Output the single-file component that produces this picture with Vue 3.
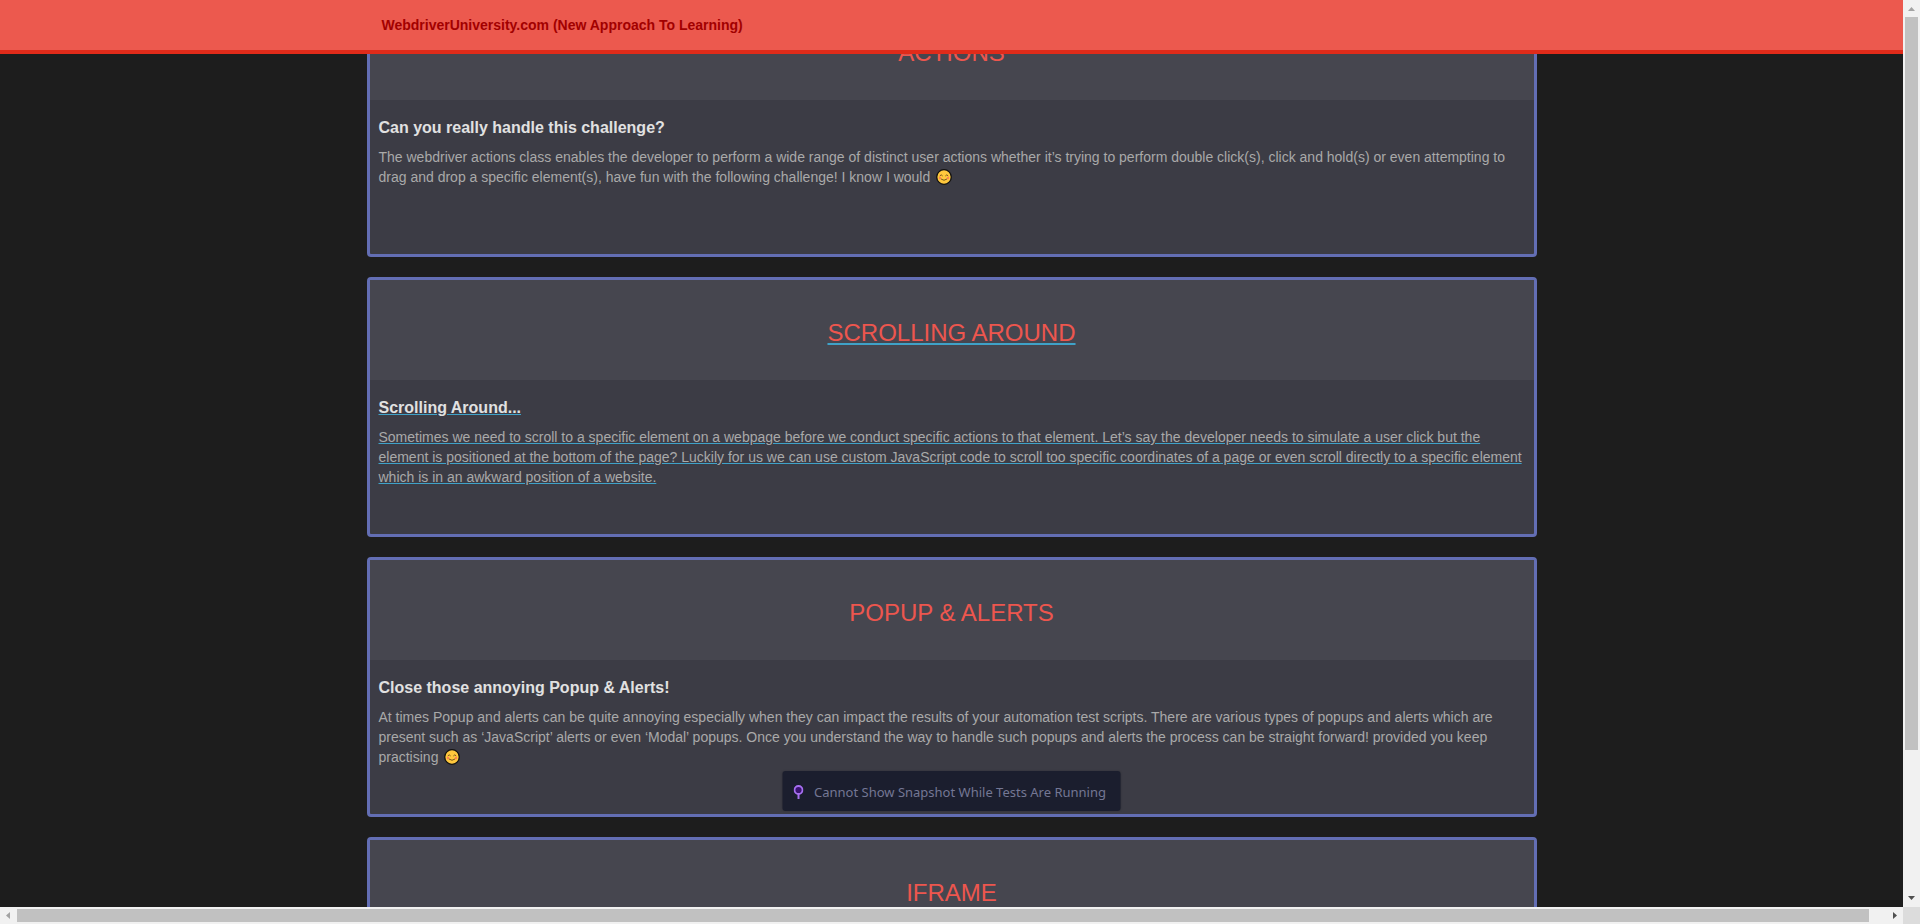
<script setup>
const cards = [
  {
    title: 'ACTIONS',
    subtitle: 'Can you really handle this challenge?',
    text: 'The webdriver actions class enables the developer to perform a wide range of distinct user actions whether it’s trying to perform double click(s), click and hold(s) or even attempting to drag and drop a specific element(s), have fun with the following challenge! I know I would',
    smile: true,
  },
  {
    title: 'SCROLLING AROUND',
    subtitle: 'Scrolling Around...',
    text: 'Sometimes we need to scroll to a specific element on a webpage before we conduct specific actions to that element. Let’s say the developer needs to simulate a user click but the element is positioned at the bottom of the page? Luckily for us we can use custom JavaScript code to scroll too specific coordinates of a page or even scroll directly to a specific element which is in an awkward position of a website.',
    active: true,
  },
  {
    title: 'POPUP & ALERTS',
    subtitle: 'Close those annoying Popup & Alerts!',
    text: 'At times Popup and alerts can be quite annoying especially when they can impact the results of your automation test scripts. There are various types of popups and alerts which are present such as ‘JavaScript’ alerts or even ‘Modal’ popups. Once you understand the way to handle such popups and alerts the process can be straight forward! provided you keep practising',
    smile: true,
  },
  { title: 'IFRAME', subtitle: '', text: '' },
]
</script>

<template>
  <div class="frame">
    <div class="view">
      <nav class="navbar">
        <div class="container">
          <a class="brand" href="#">WebdriverUniversity.com (New Approach To Learning)</a>
        </div>
      </nav>
      <main class="pane">
        <div class="container list">
          <a v-for="card in cards" :key="card.title" href="#" class="card" :class="{ active: card.active }">
            <div class="card-head"><h1>{{ card.title }}</h1></div>
            <div class="card-body">
              <h4>{{ card.subtitle }}</h4>
              <p>
                {{ card.text }}
                <svg v-if="card.smile" class="smile" viewBox="0 0 16 16" aria-hidden="true">
                  <circle cx="8" cy="8" r="7.3" fill="#ffc83d" stroke="#111" stroke-width="1.3" />
                  <circle cx="4" cy="9" r="1.2" fill="#ff8257" />
                  <circle cx="12" cy="9" r="1.2" fill="#ff8257" />
                  <path d="M4 6.6Q5.2 4.8 6.4 6.6M9.6 6.6Q10.8 4.8 12 6.6M5.2 10.2Q8 12.6 10.8 10.2" fill="none" stroke="#6a4a18" stroke-width="0.9" stroke-linecap="round" />
                </svg>
              </p>
            </div>
          </a>
        </div>
      </main>
      <div class="toast" role="status">
        <svg class="pin" viewBox="0 0 10 14" aria-hidden="true">
          <path d="M5 9V14" stroke="#a66ff0" stroke-width="2" />
          <circle cx="5" cy="5" r="4" fill="#3b1370" stroke="#a66ff0" stroke-width="1.8" />
        </svg>
        <span>Cannot Show Snapshot While Tests Are Running</span>
      </div>
    </div>

    <div class="bar vertical">
      <svg class="arrow" viewBox="0 0 17 17"><path d="M5 11L8.5 7L12 11Z" fill="#a3a3a3" /></svg>
      <div class="track"><div class="thumb"></div><div class="rest"></div></div>
      <svg class="arrow" viewBox="0 0 17 17"><path d="M5 6L8.5 10L12 6Z" fill="#505050" /></svg>
    </div>
    <div class="bar horizontal">
      <svg class="arrow" viewBox="0 0 17 17"><path d="M10 5L6 8.5L10 12Z" fill="#a3a3a3" /></svg>
      <div class="track"><div class="thumb"></div><div class="rest"></div></div>
      <svg class="arrow" viewBox="0 0 17 17"><path d="M7 5L11 8.5L7 12Z" fill="#505050" /></svg>
    </div>
    <div class="corner"></div>
  </div>
</template>

<style>
body {
  margin: 0;
  background: #1d1d1d;
}
</style>

<style scoped>
.frame {
  display: grid;
  grid-template-columns: minmax(0, 1fr) 17px;
  grid-template-rows: minmax(0, 1fr) 17px;
  height: 100vh;
  font-family: "Liberation Sans", Arial, sans-serif;
  font-size: 14px;
  line-height: 20px;
}
.view {
  position: relative;
  display: flex;
  flex-direction: column;
  min-height: 0;
  background: #1d1d1d;
}
.container {
  box-sizing: border-box;
  width: 100%;
  max-width: 1170px;
  margin: 0 auto;
}
.navbar {
  position: relative;
  z-index: 1;
  flex: none;
  background: #ec594e;
  border-bottom: 4px solid #e02b1a;
}
.navbar .container {
  padding: 15px;
}
.brand {
  display: block;
  color: #a20000;
  font-weight: bold;
  text-decoration: none;
}
.pane {
  flex: 1;
  min-height: 0;
  overflow: hidden;
}
.list {
  display: flex;
  flex-direction: column;
  gap: 20px;
  /* scrolled position: the first card runs under the navbar */
  margin-top: -57px;
}
.card {
  box-sizing: border-box;
  min-height: 260px;
  border: 3px solid #636eb4;
  border-radius: 4px;
  background: #3c3c45;
  color: #a9a9a9;
  text-decoration: none;
}
.card-head {
  padding: 40px 9px 34px;
  background: #46464f;
  text-align: center;
}
h1 {
  margin: 0;
  color: #ed564e;
  font-size: 24px;
  font-weight: normal;
  line-height: 26px;
}
.card-body {
  padding: 18px 9px;
}
h4 {
  margin: 0 0 9px;
  color: #e1e1e1;
  font-size: 16px;
  line-height: 20px;
}
p {
  margin: 0;
}
.active h1,
.active h4,
.active p {
  text-decoration: underline;
  text-decoration-color: #3fa2c8;
}
.active h4 {
  text-decoration-thickness: 1px;
}
.smile {
  width: 16px;
  height: 16px;
  margin-left: 2px;
  vertical-align: -3px;
}
.toast {
  position: absolute;
  bottom: 96px;
  left: 50%;
  display: flex;
  align-items: center;
  gap: 11px;
  box-sizing: border-box;
  height: 40px;
  padding: 2px 15px 0 11px;
  border-radius: 3px;
  background: #1b1e2e;
  box-shadow: 0 0 2px rgba(0, 0, 0, 0.2);
  color: #747794;
  font-family: "Noto Sans", "Open Sans", sans-serif;
  font-size: 13px;
  white-space: nowrap;
  transform: translateX(-50%);
}
.pin {
  width: 10px;
  height: 14px;
}
.bar {
  display: flex;
  background: #f1f1f1;
}
.vertical,
.vertical .track {
  flex-direction: column;
}
.track {
  display: flex;
  flex: 1;
}
.arrow {
  flex: none;
  width: 17px;
  height: 17px;
}
.thumb {
  background: #c1c1c1;
}
.vertical .thumb {
  flex: 733;
  margin: 0 2px;
}
.vertical .rest {
  flex: 140;
}
.horizontal .thumb {
  flex: 1852;
  margin: 2px 0;
}
.horizontal .rest {
  flex: 17;
}
.corner {
  background: #dcdcdc;
}
</style>
